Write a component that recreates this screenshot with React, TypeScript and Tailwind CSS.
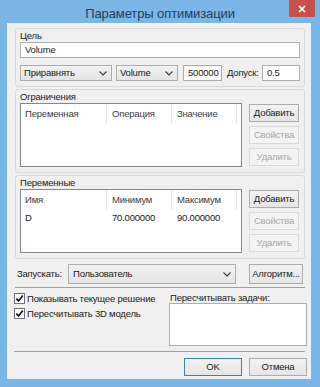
import React from 'react';

function Chevron() {
  return (
    <svg width="8" height="5" viewBox="0 0 8 5" className="shrink-0">
      <path d="M0.5 0.5 L4 4 L7.5 0.5" fill="none" stroke="#3a3a3a" strokeWidth="1.1" />
    </svg>
  );
}

function Select({ value, className = '' }: { value: string; className?: string }) {
  return (
    <div
      className={`flex items-center justify-between border border-[#acacac] bg-linear-to-b from-[#f3f3f3] to-[#e4e4e4] pl-[3px] pr-[4px] ${className}`}
    >
      <span>{value}</span>
      <Chevron />
    </div>
  );
}

function TextBox({ value = '', className = '' }: { value?: string; className?: string }) {
  return (
    <div className={`flex items-center border border-[#abadb3] bg-white px-[4px] ${className}`}>
      <span>{value}</span>
    </div>
  );
}

function Btn({
  children,
  disabled = false,
  primary = false,
  className = '',
}: {
  children: React.ReactNode;
  disabled?: boolean;
  primary?: boolean;
  className?: string;
}) {
  const look = disabled
    ? 'border-[#d9d9d9] bg-[#f4f4f4] text-[#a6a6a6]'
    : primary
      ? 'border-[#3c7fb1] bg-linear-to-b from-[#f3f3f3] to-[#e5e5e5] text-[#1a1a1a]'
      : 'border-[#acacac] bg-linear-to-b from-[#f3f3f3] to-[#e5e5e5] text-[#1a1a1a]';
  return (
    <div className={`flex items-center justify-center border shrink-0 ${look} ${className}`}>{children}</div>
  );
}

function ListView({ cols, rows }: { cols: string[]; rows: string[][] }) {
  const widths = ['w-[86px]', 'w-[65px]', 'w-[65px]'];
  return (
    <div className="w-[222px] h-[64px] border border-[#828790] bg-white shrink-0">
      <div className="flex h-[20px] text-[#3b3b3b]">
        {cols.map((c, i) => (
          <div key={c} className={`${widths[i]} flex items-center border-r border-[#e5e5e5] ${i === 0 ? 'pl-[4px]' : 'pl-[5px]'}`}>
            {c}
          </div>
        ))}
      </div>
      {rows.map((r, ri) => (
        <div key={ri} className="flex h-[16px]">
          {r.map((v, i) => (
            <div key={i} className={`${widths[i]} flex items-center ${i === 0 ? 'pl-[4px]' : 'pl-[5px]'}`}>
              {v}
            </div>
          ))}
        </div>
      ))}
    </div>
  );
}

function SideButtons() {
  return (
    <div className="flex flex-col gap-[4px] ml-[7px] pt-[1px]">
      <Btn className="w-[50px] h-[18px]">Добавить</Btn>
      <Btn disabled className="w-[50px] h-[18px]">Свойства</Btn>
      <Btn disabled className="w-[50px] h-[18px]">Удалить</Btn>
    </div>
  );
}

function Check({ label }: { label: string }) {
  return (
    <div className="flex items-center h-[13px]">
      <div className="w-[11px] h-[11px] border border-[#707070] bg-white flex items-center justify-center">
        <svg width="9" height="9" viewBox="0 0 9 9">
          <path d="M1.3 4.6 L3.6 7 L7.8 1.6" fill="none" stroke="#111" strokeWidth="1.7" />
        </svg>
      </div>
      <span className="ml-[2px]">{label}</span>
    </div>
  );
}

export default function App() {
  return (
    <div className="w-[320px] h-[387px] bg-[#7ab6e6] flex flex-col font-['Liberation_Sans',Arial,sans-serif] text-[9.5px] tracking-[-0.2px] leading-none text-[#1a1a1a] select-none">
      {/* Title bar */}
      <div className="relative h-[23px] shrink-0 flex items-center justify-center">
        <span className="text-[13px] tracking-[-0.1px] text-[#20405f] pt-[3px]">Параметры оптимизации</span>
        <div className="absolute top-0 right-[5px] w-[26px] h-[17px] bg-[#c7504b] flex items-center justify-center">
          <svg width="8" height="8" viewBox="0 0 8 8">
            <path d="M1 1 L7 7 M7 1 L1 7" stroke="#fff" strokeWidth="1.6" />
          </svg>
        </div>
      </div>

      {/* Client area */}
      <div className="ml-[7px] w-[304px] h-[356px] bg-[#f0f0f0] flex flex-col pl-[8px] pt-[5px]">
        {/* Цель */}
        <div className="w-[290px] border border-[#d9d9d9] rounded-[3px] px-[4px] pb-[5px]">
          <div className="h-[13px] flex items-center pt-[1px]">Цель</div>
          <TextBox value="Volume" className="h-[16px] w-[280px]" />
          <div className="flex items-center mt-[7px] h-[16px]">
            <Select value="Приравнять" className="w-[92px] h-[16px]" />
            <Select value="Volume" className="w-[62px] h-[16px] ml-[4px]" />
            <TextBox value="500000" className="w-[39px] h-[16px] ml-[5px]" />
            <span className="ml-[5px] w-[35px]">Допуск:</span>
            <TextBox value="0.5" className="w-[38px] h-[16px]" />
          </div>
        </div>

        {/* Ограничения */}
        <div className="w-[290px] mt-[2px] border border-[#d9d9d9] rounded-[3px] px-[4px] pb-[5px]">
          <div className="h-[13px] flex items-center pt-[1px]">Ограничения</div>
          <div className="flex">
            <ListView cols={['Переменная', 'Операция', 'Значение']} rows={[]} />
            <SideButtons />
          </div>
        </div>

        {/* Переменные */}
        <div className="w-[290px] mt-[2px] border border-[#d9d9d9] rounded-[3px] px-[4px] pb-[5px]">
          <div className="h-[13px] flex items-center pt-[1px]">Переменные</div>
          <div className="flex">
            <ListView cols={['Имя', 'Минимум', 'Максимум']} rows={[['D', '70.000000', '90.000000']]} />
            <SideButtons />
          </div>
        </div>

        {/* Запускать */}
        <div className="flex items-center mt-[5px] h-[20px]">
          <span className="ml-[2px] w-[51px]">Запускать:</span>
          <Select value="Пользователь" className="w-[168px] h-[20px] pl-[4px]" />
          <Btn className="w-[54px] h-[20px] ml-[13px]">Алгоритм...</Btn>
        </div>

        <div className="w-[290px] h-[1px] bg-[#a0a0a0] mt-[3px]" />

        <div className="flex mt-[4px] -ml-[1px]">
          <div className="w-[155px] flex flex-col gap-[2px]">
            <Check label="Показывать текущее решение" />
            <Check label="Пересчитывать 3D модель" />
          </div>
          <div className="flex flex-col">
            <div className="h-[11px] flex items-center pl-[1px]">Пересчитывать задачи:</div>
            <div className="w-[138px] h-[43px] border border-[#abadb3] bg-white" />
          </div>
        </div>

        <div className="w-[291px] h-[1px] bg-[#a0a0a0] mt-[5px] -ml-[1px]" />

        <div className="flex justify-end mt-[6px] mr-[4px] gap-[7px]">
          <Btn primary className="w-[58px] h-[18px]">OK</Btn>
          <Btn className="w-[58px] h-[18px]">Отмена</Btn>
        </div>
      </div>
    </div>
  );
}
